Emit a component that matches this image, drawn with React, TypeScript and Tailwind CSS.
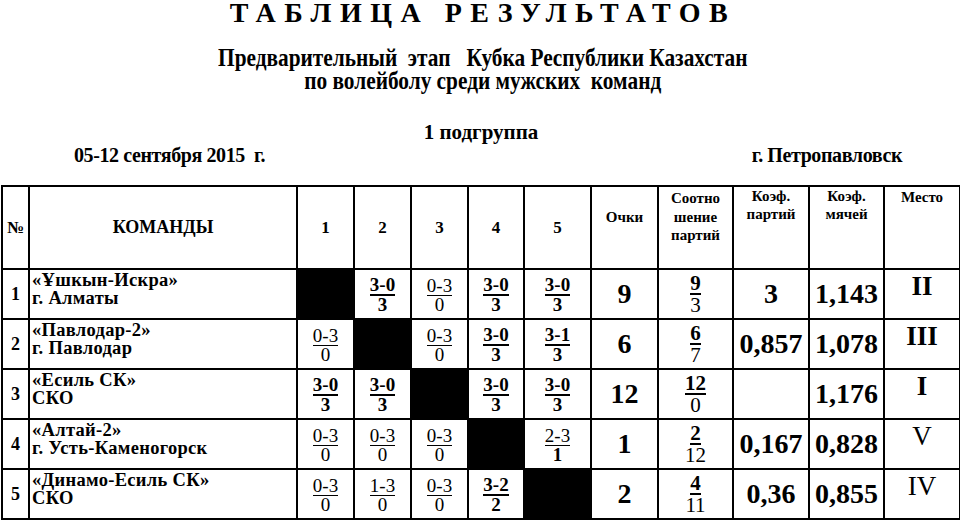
import React from "react";

type Sc = { t: string; b: string; tb: boolean; bb: boolean } | null;

const W = (t: string, b: string): Sc => ({ t, b, tb: true, bb: true });
const L = (t: string, b: string): Sc => ({ t, b, tb: false, bb: false });

type Row = {
  n: string;
  t1: string;
  t2: string;
  s: Sc[];
  pts: string;
  r: [string, string];
  kp: string;
  km: string;
  pl: string;
  plb: boolean;
};

const rows: Row[] = [
  {
    n: "1",
    t1: "«Ұшкын-Искра»",
    t2: "г. Алматы",
    s: [null, W("3-0", "3"), L("0-3", "0"), W("3-0", "3"), W("3-0", "3")],
    pts: "9",
    r: ["9", "3"],
    kp: "3",
    km: "1,143",
    pl: "II",
    plb: true,
  },
  {
    n: "2",
    t1: "«Павлодар-2»",
    t2: "г. Павлодар",
    s: [L("0-3", "0"), null, L("0-3", "0"), W("3-0", "3"), W("3-1", "3")],
    pts: "6",
    r: ["6", "7"],
    kp: "0,857",
    km: "1,078",
    pl: "III",
    plb: true,
  },
  {
    n: "3",
    t1: "«Есиль СК»",
    t2: "СКО",
    s: [W("3-0", "3"), W("3-0", "3"), null, W("3-0", "3"), W("3-0", "3")],
    pts: "12",
    r: ["12", "0"],
    kp: "",
    km: "1,176",
    pl: "I",
    plb: true,
  },
  {
    n: "4",
    t1: "«Алтай-2»",
    t2: "г. Усть-Каменогорск",
    s: [
      L("0-3", "0"),
      L("0-3", "0"),
      L("0-3", "0"),
      null,
      { t: "2-3", b: "1", tb: false, bb: true },
    ],
    pts: "1",
    r: ["2", "12"],
    kp: "0,167",
    km: "0,828",
    pl: "V",
    plb: false,
  },
  {
    n: "5",
    t1: "«Динамо-Есиль СК»",
    t2: "СКО",
    s: [L("0-3", "0"), L("1-3", "0"), L("0-3", "0"), W("3-2", "2"), null],
    pts: "2",
    r: ["4", "11"],
    kp: "0,36",
    km: "0,855",
    pl: "IV",
    plb: false,
  },
];

function Frac({ sc }: { sc: NonNullable<Sc> }) {
  return (
    <div className="inline-flex flex-col items-center text-[19px]">
      <span
        className={
          sc.tb
            ? "font-bold leading-[18px] border-b-2 border-black"
            : "font-normal leading-[18px] border-b border-black"
        }
      >
        {sc.t}
      </span>
      <span className={sc.bb ? "font-bold leading-[18px]" : "font-normal leading-[18px]"}>{sc.b}</span>
    </div>
  );
}

const cell = "border-2 border-black p-0";

export default function App() {
  return (
    <div className="w-[960px] h-[521px] bg-white overflow-hidden text-black font-['Liberation_Serif','Times_New_Roman',serif]">
      <div className="h-[26px] flex justify-center">
        <span className="text-[28px] font-bold leading-[26px] tracking-[8.5px] pl-[6px]">ТАБЛИЦА РЕЗУЛЬТАТОВ</span>
      </div>
      <div className="mt-[20px] flex flex-col items-center pl-[6px] text-[26px] font-bold leading-[23px]">
        <span className="inline-block scale-x-[0.82] whitespace-pre">Предварительный  этап   Кубка Республики Казахстан</span>
        <span className="inline-block scale-x-[0.82] whitespace-pre">по волейболу среди мужских  команд</span>
      </div>
      <div className="mt-[30px] flex justify-center pl-[2px] text-[21px] font-bold leading-[20px]">
        <span>1 подгруппа</span>
      </div>
      <div className="mt-[3px] flex justify-between pl-[74px] pr-[58px] text-[20px] font-bold leading-[20px] tracking-[-0.4px]">
        <span className="whitespace-pre">05-12 сентября 2015  г.</span>
        <span>г. Петропавловск</span>
      </div>
      <table className="mt-[20px] ml-[1px] w-[958px] table-fixed border-collapse">
        <colgroup>
          <col className="w-[27px]" />
          <col className="w-[268px]" />
          <col className="w-[57px]" />
          <col className="w-[57px]" />
          <col className="w-[57px]" />
          <col className="w-[56px]" />
          <col className="w-[67px]" />
          <col className="w-[67px]" />
          <col className="w-[75px]" />
          <col className="w-[76px]" />
          <col className="w-[75px]" />
          <col className="w-[76px]" />
        </colgroup>
        <thead>
          <tr className="h-[83px]">
            <th className={`${cell} text-[17px] font-bold align-middle`}>№</th>
            <th className={`${cell} text-[18px] font-bold align-middle`}>КОМАНДЫ</th>
            {["1", "2", "3", "4", "5"].map((c) => (
              <th key={c} className={`${cell} text-[17px] font-bold align-middle`}>
                {c}
              </th>
            ))}
            <th className={`${cell} text-[15px] font-bold align-top`}>
              <div className="pt-[21px] leading-[18px]">Очки</div>
            </th>
            <th className={`${cell} text-[15px] font-bold align-top`}>
              <div className="pt-[2px] leading-[18.5px]">
                Соотно
                <br />
                шение
                <br />
                партий
              </div>
            </th>
            <th className={`${cell} text-[15px] font-bold align-top`}>
              <div className="pt-[0px] leading-[18px]">
                Коэф.
                <br />
                партий
              </div>
            </th>
            <th className={`${cell} text-[15px] font-bold align-top`}>
              <div className="pt-[0px] leading-[18px]">
                Коэф.
                <br />
                мячей
              </div>
            </th>
            <th className={`${cell} text-[15px] font-bold align-top`}>
              <div className="pt-[1px] leading-[18px]">Место</div>
            </th>
          </tr>
        </thead>
        <tbody>
          {rows.map((r) => (
            <tr key={r.n} className="h-[50px]">
              <td className={`${cell} text-center align-middle text-[18px] font-bold`}>{r.n}</td>
              <td className={`${cell} align-top`}>
                <div className="pl-[2px] pt-[1px] text-[18.5px] font-bold leading-[18px] tracking-[0.3px]">
                  <div>{r.t1}</div>
                  <div>{r.t2}</div>
                </div>
              </td>
              {r.s.map((sc, i) =>
                sc ? (
                  <td key={i} className={`${cell} text-center align-middle`}>
                    <Frac sc={sc} />
                  </td>
                ) : (
                  <td key={i} className={`${cell} bg-black`} />
                )
              )}
              <td className={`${cell} text-center align-middle text-[28px] font-bold leading-none`}>{r.pts}</td>
              <td className={`${cell} text-center align-middle`}>
                <div className="inline-flex flex-col items-center text-[21px]">
                  <span className="font-bold leading-[19px] border-b-2 border-black">{r.r[0]}</span>
                  <span className="font-normal leading-[21px]">{r.r[1]}</span>
                </div>
              </td>
              <td className={`${cell} text-center align-middle text-[28px] font-bold leading-none`}>{r.kp}</td>
              <td className={`${cell} text-center align-middle text-[28px] font-bold leading-none`}>{r.km}</td>
              <td className={`${cell} text-center align-top`}>
                <div className={`pt-[3px] text-[27px] leading-none ${r.plb ? "font-bold" : "font-normal"}`}>{r.pl}</div>
              </td>
            </tr>
          ))}
        </tbody>
      </table>
    </div>
  );
}
